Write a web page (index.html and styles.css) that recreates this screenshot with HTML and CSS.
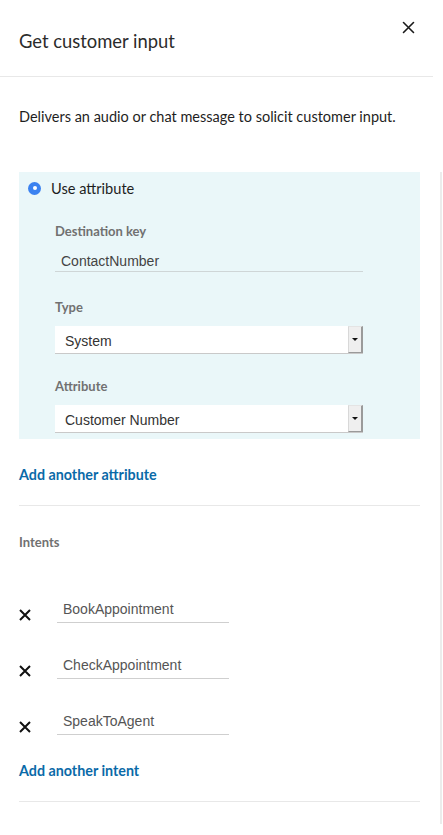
FILE: index.html
```html
<!DOCTYPE html>
<html lang="en">
<head>
<meta charset="utf-8">
<title>Get customer input</title>
<link rel="stylesheet" href="styles.css">
</head>
<body>
<div class="sheet">
  <header class="header">
    <h1 class="title">Get customer input</h1>
    <button class="close" aria-label="Close">
      <svg width="13" height="13" viewBox="0 0 13 13"><path d="M1.5 1.5 L11.5 11.5 M11.5 1.5 L1.5 11.5" stroke="#1a1a1a" stroke-width="1.6" stroke-linecap="round"/></svg>
    </button>
  </header>
  <p class="desc">Delivers an audio or chat message to solicit customer input.</p>
  <div class="body">
    <div class="content">
      <section class="panel">
        <label class="radio-row">
          <span class="radio"></span>
          <span class="radio-label">Use attribute</span>
        </label>
        <div class="fields">
          <div class="field">
            <div class="label">Destination key</div>
            <div class="input">ContactNumber</div>
          </div>
          <div class="field">
            <div class="label">Type</div>
            <div class="select">
              <span class="select-text">System</span>
              <span class="select-btn"><span class="tri"></span></span>
            </div>
          </div>
          <div class="field">
            <div class="label">Attribute</div>
            <div class="select">
              <span class="select-text">Customer Number</span>
              <span class="select-btn"><span class="tri"></span></span>
            </div>
          </div>
        </div>
      </section>
      <a class="link link-attr" href="#">Add another attribute</a>
      <hr class="divider divider-1">
      <div class="label intents-label">Intents</div>
      <div class="intents">
        <div class="intent">
          <svg class="x" width="14" height="14" viewBox="0 0 14 14"><path d="M2 2 L12 12 M12 2 L2 12" stroke="#111" stroke-width="2"/></svg>
          <div class="intent-input">BookAppointment</div>
        </div>
        <div class="intent">
          <svg class="x" width="14" height="14" viewBox="0 0 14 14"><path d="M2 2 L12 12 M12 2 L2 12" stroke="#111" stroke-width="2"/></svg>
          <div class="intent-input">CheckAppointment</div>
        </div>
        <div class="intent">
          <svg class="x" width="14" height="14" viewBox="0 0 14 14"><path d="M2 2 L12 12 M12 2 L2 12" stroke="#111" stroke-width="2"/></svg>
          <div class="intent-input">SpeakToAgent</div>
        </div>
      </div>
      <a class="link link-intent" href="#">Add another intent</a>
      <hr class="divider divider-2">
    </div>
    <div class="track"></div>
  </div>
</div>
</body>
</html>
```

FILE: styles.css
```css
* { box-sizing: border-box; }
html, body { margin: 0; padding: 0; background: #fff; }
body {
  font-family: Lato, "Noto Sans", sans-serif;
  color: #222;
  width: 443px;
  height: 835px;
  overflow: hidden;
}
.sheet { width: 443px; }

.header {
  width: 433px;
  height: 77px;
  border-bottom: 1px solid #e8e8e8;
  display: flex;
  align-items: flex-start;
  justify-content: space-between;
  padding: 0 0 0 19px;
}
.title {
  margin: 29px 0 0 0;
  font-size: 18.4px;
  line-height: 24px;
  font-weight: 400;
  color: #2b2b2b;
}
.close {
  margin: 21px 18px 0 0;
  padding: 0;
  border: 0;
  background: transparent;
  width: 13px;
  height: 13px;
  display: flex;
}

.desc {
  margin: 30px 0 0 19px;
  font-size: 14.5px;
  line-height: 20px;
  color: #1e1e1e;
}

.body {
  display: flex;
  margin-top: 45px;
}
.content {
  width: 401px;
  margin-left: 19px;
  padding-bottom: 22px;
  display: flex;
  flex-direction: column;
}
.track {
  width: 2px;
  margin-left: 20px;
  background: #ececec;
}

.panel {
  background: #eaf7f9;
  padding: 6px 0 6px 9px;
}
.radio-row {
  display: flex;
  align-items: center;
  height: 20px;
}
.radio {
  width: 13px;
  height: 13px;
  border-radius: 50%;
  background: #3b82f0;
  position: relative;
  flex: none;
}
.radio::after {
  content: "";
  position: absolute;
  left: 4.5px;
  top: 4.5px;
  width: 4px;
  height: 4px;
  border-radius: 50%;
  background: #fff;
}
.radio-label {
  margin-left: 10px;
  font-size: 14.6px;
  color: #1e1e1e;
}

.fields {
  margin-left: 27px;
  width: 308px;
  padding-top: 24px;
  display: flex;
  flex-direction: column;
  gap: 23px;
}
.field { display: flex; flex-direction: column; gap: 10px; }
.label {
  font-size: 13px;
  line-height: 18px;
  font-weight: 700;
  color: #717171;
}
.input {
  height: 22px;
  border-bottom: 1px solid #cfd6d7;
  padding-left: 6px;
  font-family: "Liberation Sans", Arial, sans-serif;
  font-size: 14px;
  line-height: 22px;
  color: #444;
}
.field:first-child + .field { margin-top: 3px; }

.select {
  height: 28px;
  display: flex;
  background: #fff;
  border-bottom: 1px solid #c9c9c9;
}
.select-text {
  flex: 1;
  padding-left: 10px;
  font-family: "Liberation Sans", Arial, sans-serif;
  font-size: 14px;
  line-height: 30px;
  color: #333;
}
.select-btn {
  width: 15px;
  background: #efefef;
  border-left: 1px solid #d8d8d8;
  border-top: 1px solid #e4e4e4;
  border-right: 2px solid #9a9a9a;
  border-bottom: 1px solid #9a9a9a;
  display: flex;
  align-items: center;
  justify-content: center;
}
.tri {
  width: 0;
  height: 0;
  border-left: 3px solid transparent;
  border-right: 3px solid transparent;
  border-top: 3px solid #111;
}

.link {
  font-size: 14.3px;
  line-height: 20px;
  font-weight: 700;
  color: #0a6aa8;
  text-decoration: none;
  align-self: flex-start;
}
.link-attr { margin-top: 26px; }
.divider {
  border: 0;
  border-top: 1px solid #e8e8e8;
  margin: 0;
  width: 100%;
}
.divider-1 { margin-top: 20px; }
.intents-label { margin-top: 27px; }

.intents {
  margin-top: 50px;
  display: flex;
  flex-direction: column;
  gap: 34px;
}
.intent {
  display: flex;
  align-items: flex-end;
  height: 22px;
}
.x {
  margin-left: -1px;
  flex: none;
  position: relative;
  top: -1px;
}
.intent-input {
  margin-left: 25px;
  width: 172px;
  height: 22px;
  border-bottom: 1px solid #cfcfcf;
  padding-left: 6px;
  font-family: "Liberation Sans", Arial, sans-serif;
  font-size: 14px;
  line-height: 16px;
  color: #555;
}
.link-intent { margin-top: 26px; }
.divider-2 { margin-top: 20px; }
```
